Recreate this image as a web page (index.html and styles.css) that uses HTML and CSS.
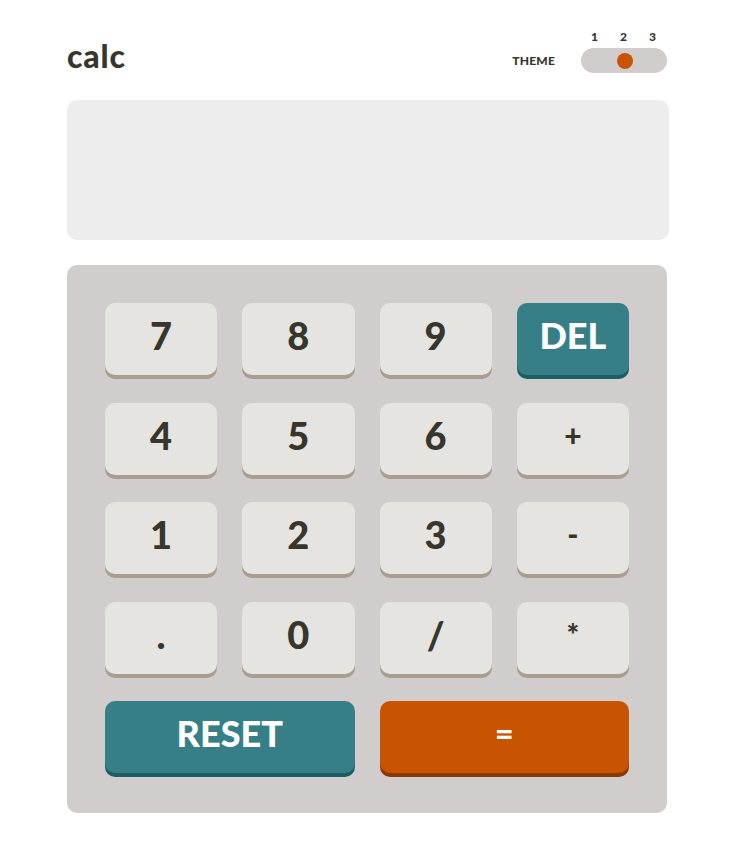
FILE: index.html
```html
<!DOCTYPE html>
<html lang="en">
<head>
<meta charset="utf-8">
<title>calc</title>
<link rel="stylesheet" href="styles.css">
</head>
<body>
<main class="app">
  <header class="header">
    <h1 class="logo">calc</h1>
    <div class="theme">
      <span class="theme-label">THEME</span>
      <div class="switch">
        <div class="switch-nums"><span>1</span><span>2</span><span>3</span></div>
        <div class="switch-track"><span class="switch-dot"></span></div>
      </div>
    </div>
  </header>
  <section class="screen"></section>
  <section class="keypad">
    <button class="key">7</button>
    <button class="key">8</button>
    <button class="key">9</button>
    <button class="key key-alt">DEL</button>
    <button class="key">4</button>
    <button class="key">5</button>
    <button class="key">6</button>
    <button class="key key-op">+</button>
    <button class="key">1</button>
    <button class="key">2</button>
    <button class="key">3</button>
    <button class="key key-op">-</button>
    <button class="key">.</button>
    <button class="key">0</button>
    <button class="key">/</button>
    <button class="key key-op">*</button>
    <button class="key key-alt key-wide">RESET</button>
    <button class="key key-eq key-wide">=</button>
  </section>
</main>
</body>
</html>
```
FILE: styles.css
```css
* { box-sizing: border-box; }
html, body { margin: 0; padding: 0; background: #ffffff; }
body { font-family: "Lato", "Liberation Sans", sans-serif; color: #36362c; }

.app {
  width: 602px;
  margin-left: 67px;
  padding-top: 28px;
}

.header {
  display: flex;
  justify-content: space-between;
  align-items: flex-end;
  width: 600px;
  height: 45px;
}

.logo {
  margin: 0 0 1px 0;
  font-size: 32px;
  font-weight: 900;
  line-height: 1;
  letter-spacing: 0.8px;
}

.theme {
  display: flex;
  align-items: flex-end;
  gap: 26px;
}

.theme-label {
  font-size: 12px;
  font-weight: 900;
  letter-spacing: 0.2px;
  margin-bottom: 5px;
}

.switch {
  display: flex;
  flex-direction: column;
  gap: 6px;
}

.switch-nums {
  display: flex;
  justify-content: space-between;
  padding: 0 11px 0 10px;
  font-size: 12px;
  font-weight: 900;
  line-height: 10px;
}

.switch-track {
  width: 86px;
  height: 25px;
  border-radius: 13px;
  background: #d2cdcd;
  display: flex;
  align-items: center;
  justify-content: center;
}

.switch-dot {
  width: 16px;
  height: 16px;
  border-radius: 50%;
  background: #c85402;
  margin-left: 1px;
}

.screen {
  margin-top: 27px;
  height: 140px;
  border-radius: 10px;
  background: #ededed;
}

.keypad {
  margin-top: 25px;
  width: 600px;
  padding: 38px 38px 40px;
  border-radius: 10px;
  background: #d2cdcd;
  display: grid;
  grid-template-columns: repeat(4, 1fr);
  grid-auto-rows: 72px;
  column-gap: 25px;
  row-gap: 27.5px;
}

.key {
  border: none;
  border-radius: 10px;
  background: #e5e4e1;
  box-shadow: 0 4px 0 #a79e91;
  color: #36362c;
  font-family: "Lato", "Liberation Sans", sans-serif;
  font-size: 38px;
  font-weight: 900;
  line-height: 1;
  padding: 0 0 8px 0;
}

.key-op { font-size: 30px; }

.key-alt {
  background: #377f86;
  box-shadow: 0 4px 0 #1b5f65;
  color: #ffffff;
  font-size: 36px;
}

.key-eq {
  background: #c85402;
  box-shadow: 0 4px 0 #873901;
  color: #ffffff;
  font-size: 32px;
}

.key-wide { grid-column: span 2; }
```
